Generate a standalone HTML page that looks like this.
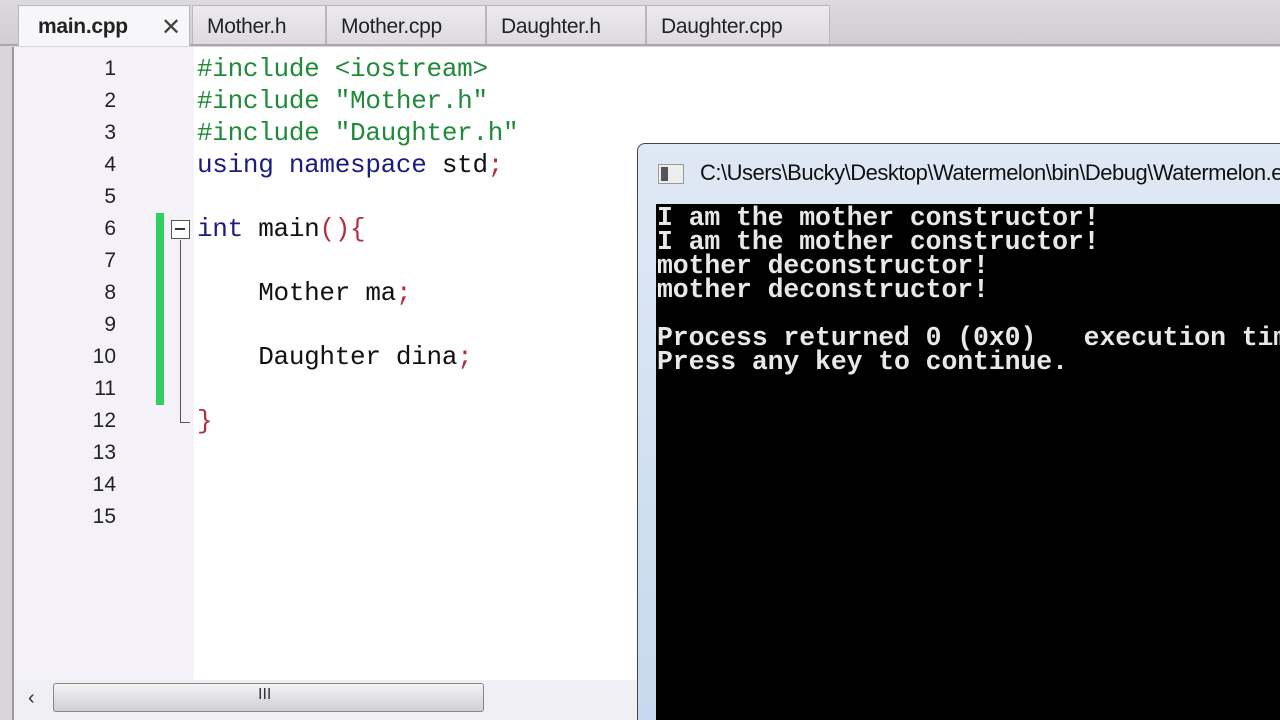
<!DOCTYPE html>
<html><head><meta charset="utf-8"><style>
*{margin:0;padding:0;box-sizing:border-box}
html,body{width:1280px;height:720px;overflow:hidden}
body{background:#d8d6da;position:relative;font-family:"Liberation Sans",sans-serif}
.tabs{position:absolute;left:0;top:0;width:1280px;height:46px;background:linear-gradient(#dcdadf,#d0ced3);border-bottom:2px solid #a9a7ac}
.tab{position:absolute;top:5px;height:39px;background:linear-gradient(#eceaee,#dddbe0);border:1px solid #b9b7bc;border-bottom:none;font-size:21px;color:#222;padding:9px 0 0 14px;letter-spacing:-0.3px}
.tab.act{background:#f7f6f9;font-weight:bold;height:41px}
.editor{position:absolute;left:12px;top:47px;width:1268px;height:673px;background:#fff;border-left:2px solid #9a989c;overflow:hidden}
.gutter{position:absolute;left:0;top:0;width:180px;height:640px;background:#f4f2f8}
.ln{position:absolute;left:0;width:102px;text-align:right;font-family:"Liberation Sans",sans-serif;font-size:21px;color:#222;line-height:32px}
.code{position:absolute;left:183px;font-family:"Liberation Mono",monospace;font-size:26px;line-height:32px;white-space:pre;color:#111;letter-spacing:-0.3px}
.pp{color:#1f8a3a}.kw{color:#1c1c80}.p{color:#b03040}
.con{position:absolute;left:637px;top:143px;width:643px;height:577px;background:linear-gradient(#dfe9f5,#c6d9ee);border:1px solid #444;border-right:none;border-bottom:none;border-radius:8px 0 0 0;overflow:hidden}
.title{position:absolute;left:62px;top:16px;font-size:22px;color:#111;white-space:nowrap;letter-spacing:-0.5px}
.ico{position:absolute;left:20px;top:20px;width:26px;height:20px;background:#eee;border:1px solid #999}
.ico:before{content:"";position:absolute;left:2px;top:2px;width:7px;height:14px;background:#555}
.black{position:absolute;left:18px;top:60px;width:630px;height:520px;background:#000;overflow:hidden}
.out{position:absolute;left:1px;top:2px;font-family:"Liberation Mono",monospace;font-weight:bold;font-size:26.5px;line-height:24px;color:#e8e8e8;white-space:pre;letter-spacing:-0.1px}
</style></head><body>
<div class="tabs">
<div class="tab act" style="left:18px;width:172px;padding-left:19px">main.cpp<span style="position:absolute;left:142px;top:7px;font-weight:normal;font-size:24px;color:#444">✕</span></div>
<div class="tab" style="left:192px;width:134px">Mother.h</div>
<div class="tab" style="left:326px;width:160px">Mother.cpp</div>
<div class="tab" style="left:486px;width:160px">Daughter.h</div>
<div class="tab" style="left:646px;width:184px">Daughter.cpp</div>
</div>
<div class="editor">
<div class="gutter"></div>
<div class="ln" style="top:6px">1<br>2<br>3<br>4<br>5<br>6<br>7<br>8<br>9<br>10<br>11<br>12<br>13<br>14<br>15</div>
<div style="position:absolute;left:142px;top:166px;width:8px;height:192px;background:#2fd060"></div>
<div style="position:absolute;left:157px;top:173px;width:19px;height:19px;border:1.5px solid #555;background:#fff"><div style="position:absolute;left:3px;top:7px;width:10px;height:1.5px;background:#333"></div></div>
<div style="position:absolute;left:166px;top:193px;width:1px;height:183px;background:#555"></div>
<div style="position:absolute;left:166px;top:375px;width:10px;height:1px;background:#555"></div>
<div class="code" style="top:6px"><span class="pp">#include &lt;iostream&gt;</span>
<span class="pp">#include "Mother.h"</span>
<span class="pp">#include "Daughter.h"</span>
<span class="kw">using namespace</span> std<span class="p">;</span>

<span class="kw">int</span> main<span class="p">(){</span>

    Mother ma<span class="p">;</span>

    Daughter dina<span class="p">;</span>

<span class="p">}</span></div>
<div style="position:absolute;left:0;top:633px;width:640px;height:40px;background:#f0eff3"></div>
<div style="position:absolute;left:14px;top:640px;font-size:20px;color:#333">‹</div>
<div style="position:absolute;left:39px;top:636px;width:431px;height:29px;border:1px solid #888;border-radius:3px;background:linear-gradient(#f4f4f6,#cfcfd4)"><span style="position:absolute;left:204px;top:2px;font-size:16px;color:#333">III</span></div>
</div>
<div class="con">
<div class="ico"></div>
<div class="title">C:\Users\Bucky\Desktop\Watermelon\bin\Debug\Watermelon.exe</div>
<div class="black"><div class="out">I am the mother constructor!
I am the mother constructor!
mother deconstructor!
mother deconstructor!

Process returned 0 (0x0)   execution time : 0.016 s
Press any key to continue.</div></div>
</div>
</body></html>
